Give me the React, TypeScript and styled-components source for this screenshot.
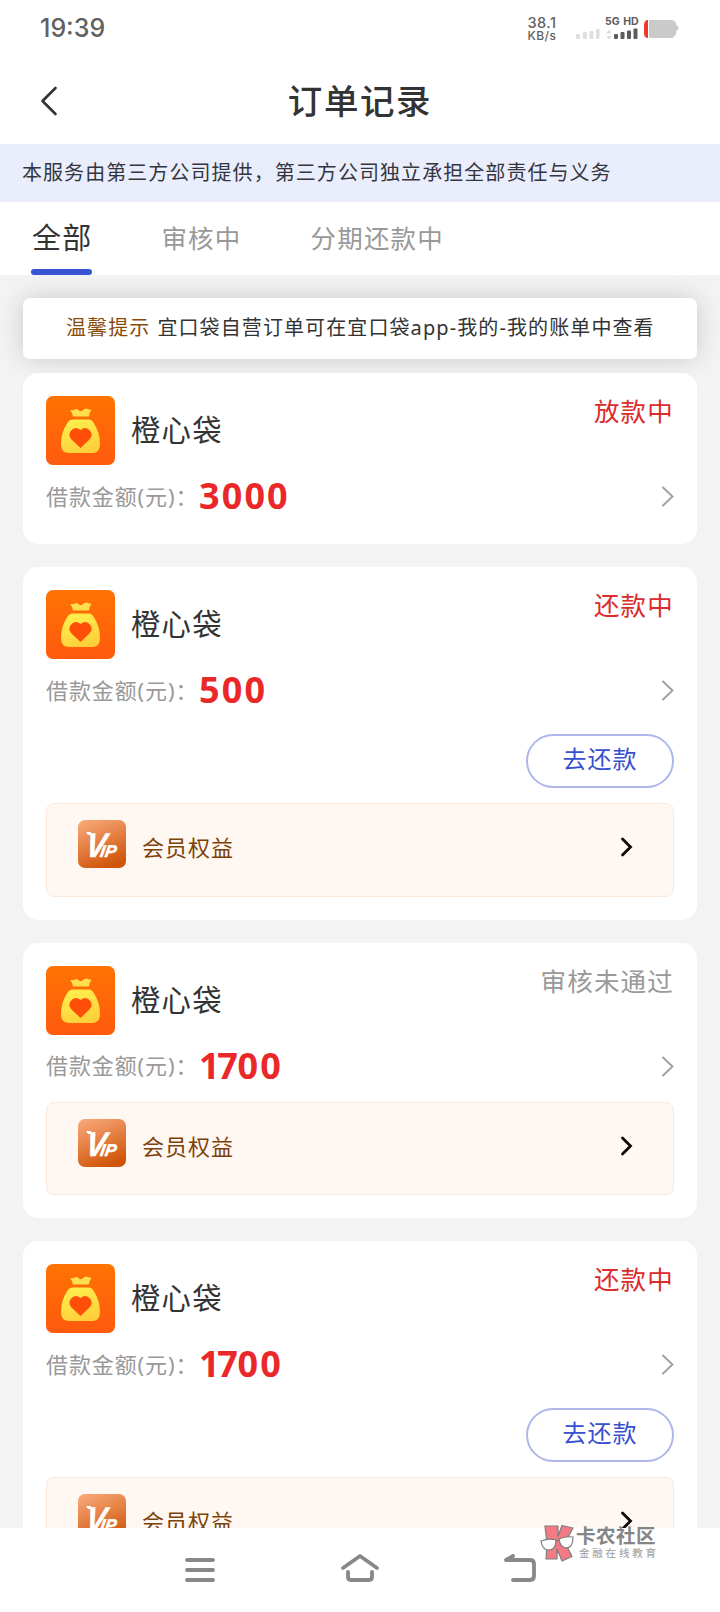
import React from "react";
import styled, { createGlobalStyle } from "styled-components";

const GlobalStyle = createGlobalStyle`
  * { box-sizing: border-box; }
  body {
    margin: 0;
    background: #fff;
    font-family: "Noto Sans", "Noto Sans CJK SC", sans-serif;
    color: #333;
  }
  svg { display: block; flex: none; }
`;

const Screen = styled.div`
  position: relative;
  display: flex;
  flex-direction: column;
  width: 720px;
  height: 1612px;
  overflow: hidden;
  background: #fff;
`;

const StatusBar = styled.div`
  display: flex;
  justify-content: space-between;
  height: 58px;
  padding: 12px 40px 0 40px;
  color: #616161;
  font-family: Inter, sans-serif;
`;

const Clock = styled.div`
  font-size: 25px;
  line-height: 33px;
  font-weight: 500;
  letter-spacing: 0;
`;

const StatusRight = styled.div`
  display: flex;
`;

const NetSpeed = styled.div`
  display: flex;
  flex-direction: column;
  align-items: center;
  width: 32px;
  margin-right: 16px;
  padding-top: 4px;
  font-weight: 500;
  font-size: 14.5px;
  line-height: 14px;
  letter-spacing: 0.5px;
  white-space: nowrap;
`;

const NetUnit = styled.span`
  font-size: 12px;
  line-height: 12px;
  font-weight: 500;
`;

const Header = styled.header`
  display: grid;
  grid-template-columns: 80px 1fr 80px;
  align-items: center;
  height: 86px;
`;

const BackButton = styled.div`
  padding-left: 40px;
`;

const Title = styled.h1`
  margin: 0;
  text-align: center;
  font-size: 34.5px;
  line-height: 50px;
  font-weight: 500;
  letter-spacing: 1.6px;
`;

const Notice = styled.div`
  height: 58px;
  padding-left: 22px;
  background: #eaedfc;
  color: #33363f;
  font-size: 20px;
  line-height: 57px;
  letter-spacing: 1.06px;
  white-space: nowrap;
`;

const Tabs = styled.nav`
  display: flex;
  gap: 69px;
  height: 73px;
  padding-left: 32px;
`;

const Tab = styled.div<{ $active?: boolean }>`
  height: 73px;
  color: ${(p) => (p.$active ? "#333" : "#999")};
  font-size: ${(p) => (p.$active ? "29px" : "25.5px")};
  line-height: 72px;
  letter-spacing: 1.2px;
  white-space: nowrap;
  &::after {
    content: "";
    display: ${(p) => (p.$active ? "block" : "none")};
    width: 61px;
    height: 6px;
    margin: -5px 0 0 -1px;
    border-radius: 3px;
    background: #3954d5;
  }
`;

const Content = styled.main`
  flex: 1;
  min-height: 0;
  overflow: hidden;
  padding: 23px 23px 0;
  background: #f3f3f3;
`;

const Tip = styled.div`
  height: 61px;
  margin-bottom: 14px;
  border-radius: 7px;
  background: #fff;
  box-shadow: 0 0 26px rgba(0, 0, 0, 0.17);
  padding-left: 43px;
  font-size: 20px;
  line-height: 59px;
  letter-spacing: 1.1px;
  white-space: nowrap;
`;

const TipLabel = styled.span`
  margin-right: 7px;
  color: #8a4b0a;
`;

const Card = styled.section`
  position: relative;
  margin-bottom: 23px;
  padding: 23px;
  border-radius: 15px;
  background: #fff;
`;

const CardHead = styled.div`
  display: flex;
  height: 69px;
`;

const Name = styled.div`
  flex: 1;
  margin-left: 16px;
  font-size: 29.3px;
  line-height: 69px;
  letter-spacing: 1.3px;
`;

const Status = styled.div<{ $muted?: boolean }>`
  color: ${(p) => (p.$muted ? "#999" : "#db2b2b")};
  font-size: 25.5px;
  line-height: 30px;
  letter-spacing: 1.2px;
`;

const AmountRow = styled.div`
  display: flex;
  align-items: center;
  height: 48px;
  margin-top: 8px;
`;

const AmountLabel = styled.span`
  width: 153px;
  padding-bottom: 5px;
  color: #999;
  font-size: 22px;
  letter-spacing: 0.9px;
  white-space: nowrap;
`;

const Amount = styled.span`
  flex: 1;
  color: #ea2829;
  font-size: 36px;
  line-height: 46px;
  padding-bottom: 2px;
  font-weight: 700;
`;

const Digit = styled.span<{ $value: string }>`
  letter-spacing: ${(p) => (p.$value === "1" ? "-2.4px" : p.$value === "7" ? "-0.2px" : "2.1px")};
`;

const Actions = styled.div`
  display: flex;
  justify-content: flex-end;
  padding: 19px 0 4px;
`;

const PayButton = styled.button`
  width: 148px;
  height: 54px;
  padding: 0 0 5px;
  border: 2px solid #adb7ea;
  border-radius: 27px;
  background: #fff;
  color: #3650cf;
  font: inherit;
  font-size: 24px;
  line-height: 46px;
  letter-spacing: 1px;
`;

const Vip = styled.div`
  display: flex;
  height: 93.5px;
  margin-top: 11px;
  padding: 16px 40px 0 31px;
  border: 1px solid #fae9de;
  border-radius: 8px;
  background: #fff7f1;
`;

const VipText = styled.span`
  flex: 1;
  margin-left: 16px;
  color: #7d4209;
  font-size: 22px;
  line-height: 55px;
  letter-spacing: 1px;
`;

const VipArrow = styled.div`
  padding-top: 17px;
`;

const NavBar = styled.footer`
  display: flex;
  justify-content: center;
  gap: 120px;
  height: 84px;
  padding-top: 22px;
  background: #fff;
`;

const Watermark = styled.div`
  position: absolute;
  left: 539px;
  top: 1524px;
  display: flex;
`;

const MarkText = styled.div`
  display: flex;
  flex-direction: column;
  margin-left: 1px;
  padding-top: 1px;
  color: #858585;
  font-size: 19.5px;
  font-weight: 700;
  line-height: 22px;
  letter-spacing: 0.5px;
  white-space: nowrap;
`;

const MarkSub = styled.span`
  padding-left: 3px;
  color: #aaa;
  font-size: 10.5px;
  font-weight: 500;
  line-height: 13px;
  letter-spacing: 2.8px;
`;

const StatusIcons = () => (
  <svg width="106" height="30" viewBox="0 0 106 30">
    <g fill="#dedede">
      <rect x="2" y="22" width="4" height="5" rx="1" />
      <rect x="9" y="20" width="4" height="7" rx="1" />
      <rect x="15.500" y="19" width="4" height="8" rx="1" />
      <rect x="22" y="17" width="3.500" height="10" rx="1" />
      <path d="M32 21.500l3-4 3 4zM32 24l3 3.500 3-3.500z" />
    </g>
    <g fill="#5c5c5c">
      <rect x="40" y="22" width="4" height="5" rx="1" />
      <rect x="46.500" y="20" width="4" height="7" rx="1" />
      <rect x="53" y="18.500" width="4" height="8.500" rx="1" />
      <rect x="59.500" y="16.500" width="4" height="10.500" rx="1" />
      <text x="31" y="13" fontFamily="Inter" fontSize="10.500" fontWeight="700" wordSpacing="1.200">5G HD</text>
    </g>
    <path d="M75 8h22q5 0 5.500 5.500q2 0 2 2.500t-2 2.500q-.5 7.500-5.500 7.500H75z" fill="#cacaca" />
    <path d="M74 8h-1q-3 1-3 5v8q0 4 3 5h1z" fill="#ee3a2c" />
  </svg>
);

const BagLogo = () => (
  <svg width="69" height="69" viewBox="0 0 69 69">
    <defs>
      <linearGradient id="bagBg" x1="0" y1="0" x2="0" y2="1">
        <stop offset="0" stopColor="#ff7303" />
        <stop offset="1" stopColor="#ff5a0e" />
      </linearGradient>
      <linearGradient id="bagFill" x1="0.2" y1="0" x2="0.6" y2="1">
        <stop offset="0" stopColor="#fff04e" />
        <stop offset="1" stopColor="#ffcf3a" />
      </linearGradient>
    </defs>
    <rect width="69" height="69" rx="7" fill="url(#bagBg)" />
    <path
      d="M27 20.500q0-3-3-6.500q3 .5 5-.5q2-1.500 4 1q1.500 1.500 3.500 0q3-3 5.500-1.500q1.500 1 3.500.8q-2.500 3-2.500 6.700z"
      fill="#ffe04c"
    />
    <path
      d="M27 23.500h16q3 0 5 4q6 9 6 20.500q0 9-8 9H23q-8 0-8-9q0-11.500 6-20.500q2-4 6-4z"
      fill="url(#bagFill)"
    />
    <path
      d="M34.500 52L25.500 43.500q-4-4-.8-8.500q4.300-5.500 9.800-1q5.500-4.500 9.800 1q3.200 4.500-.8 8.500z"
      fill="#ff4e08"
    />
  </svg>
);

const VipLogo = () => (
  <svg width="48" height="48" viewBox="0 0 48 48">
    <defs>
      <linearGradient id="vipBg" x1="0.2" y1="0" x2="0.6" y2="1">
        <stop offset="0" stopColor="#f7a676" />
        <stop offset="1" stopColor="#cf5408" />
      </linearGradient>
    </defs>
    <rect width="48" height="48" rx="7" fill="url(#vipBg)" />
    <text
      x="0"
      y="0"
      transform="translate(6.500 37) skewX(-9)"
      fill="#fff"
      stroke="#fff"
      strokeWidth="0.500"
      fontFamily="Liberation Sans"
      fontWeight="700"
      fontStyle="italic"
      fontSize="34"
    >
      <tspan textLength="20" lengthAdjust="spacingAndGlyphs">V</tspan>
      <tspan fontSize="17" dx="-5">IP</tspan>
    </text>
    <path d="M8 12h5v3h-3z" fill="#fff" />
  </svg>
);

const Chevron = () => (
  <svg width="13" height="22" viewBox="0 0 13 22">
    <path d="M2 1.500l9.500 9L2 19.500" fill="none" stroke="#a0a0a0" strokeWidth="1.900" strokeLinecap="round" />
  </svg>
);

const BoldChevron = () => (
  <svg width="13" height="20" viewBox="0 0 13 20">
    <path d="M2.500 2l8 8-8 8" fill="none" stroke="#0a0a0a" strokeWidth="2.800" strokeLinecap="round" />
  </svg>
);

const NavIcon = ({ d }: { d: string }) => (
  <svg width="40" height="36" viewBox="0 0 40 36">
    <path d={d} fill="none" stroke="#888" strokeWidth="3.800" strokeLinecap="round" strokeLinejoin="round" />
  </svg>
);

const MarkLogo = () => (
  <svg width="36" height="38" viewBox="0 0 36 38">
    <g fill="#f27b86" stroke="#7d7d7d" strokeWidth="1.200" strokeLinejoin="round">
      <path d="M6 2h13v10l4-10.500 11 2.500-8 14.500 7 14-10 4.500-5-12v10H7l1-15z" />
    </g>
    <g fill="#fff" stroke="#7d7d7d" strokeWidth="1.200">
      <path d="M2 17q8-3 15-1q0 10-7 10t-8-9z" />
      <path d="M20 15q7-3 14-2q0 11-7 11q-6-1-7-9zM17 17l3-1" />
    </g>
  </svg>
);

type Order = { status: string; muted?: boolean; amount: string; payable?: boolean; vip?: boolean };

const orders: Order[] = [
  { status: "放款中", amount: "3000" },
  { status: "还款中", amount: "500", payable: true, vip: true },
  { status: "审核未通过", muted: true, amount: "1700", vip: true },
  { status: "还款中", amount: "1700", payable: true, vip: true },
];

const OrderCard = ({ order }: { order: Order }) => (
  <Card>
    <CardHead>
      <BagLogo />
      <Name>橙心袋</Name>
      <Status $muted={order.muted}>{order.status}</Status>
    </CardHead>
    <AmountRow>
      <AmountLabel>借款金额(元)：</AmountLabel>
      <Amount>
        {order.amount.split("").map((d, i) => (
          <Digit key={i} $value={d}>{d}</Digit>
        ))}
      </Amount>
      <Chevron />
    </AmountRow>
    {order.payable && (
      <Actions>
        <PayButton>去还款</PayButton>
      </Actions>
    )}
    {order.vip && (
      <Vip>
        <VipLogo />
        <VipText>会员权益</VipText>
        <VipArrow>
          <BoldChevron />
        </VipArrow>
      </Vip>
    )}
  </Card>
);

export default function App() {
  return (
    <Screen>
      <GlobalStyle />
      <StatusBar>
        <Clock>19:39</Clock>
        <StatusRight>
          <NetSpeed>
            38.1
            <NetUnit>KB/s</NetUnit>
          </NetSpeed>
          <StatusIcons />
        </StatusRight>
      </StatusBar>
      <Header>
        <BackButton>
          <svg width="18" height="30" viewBox="0 0 18 30">
            <path d="M15.500 2L2.500 15l13 13" fill="none" stroke="#333" strokeWidth="2.600" strokeLinecap="round" strokeLinejoin="round" />
          </svg>
        </BackButton>
        <Title>订单记录</Title>
      </Header>
      <Notice>本服务由第三方公司提供，第三方公司独立承担全部责任与义务</Notice>
      <Tabs>
        <Tab $active>全部</Tab>
        <Tab>审核中</Tab>
        <Tab>分期还款中</Tab>
      </Tabs>
      <Content>
        <Tip>
          <TipLabel>温馨提示</TipLabel>宜口袋自营订单可在宜口袋app-我的-我的账单中查看
        </Tip>
        {orders.map((order, i) => (
          <OrderCard key={i} order={order} />
        ))}
      </Content>
      <NavBar>
        <NavIcon d="M7 10h26M7 20h26M7 30h26" />
        <NavIcon d="M3 18L20 6l17 12M8 22v5q0 3 3 3h18q3 0 3-3v-5" />
        <NavIcon d="M13 6L6 10h24q4 0 4 4v12q0 4-4 4H13" />
      </NavBar>
      <Watermark>
        <MarkLogo />
        <MarkText>
          卡农社区
          <MarkSub>金融在线教育</MarkSub>
        </MarkText>
      </Watermark>
    </Screen>
  );
}
